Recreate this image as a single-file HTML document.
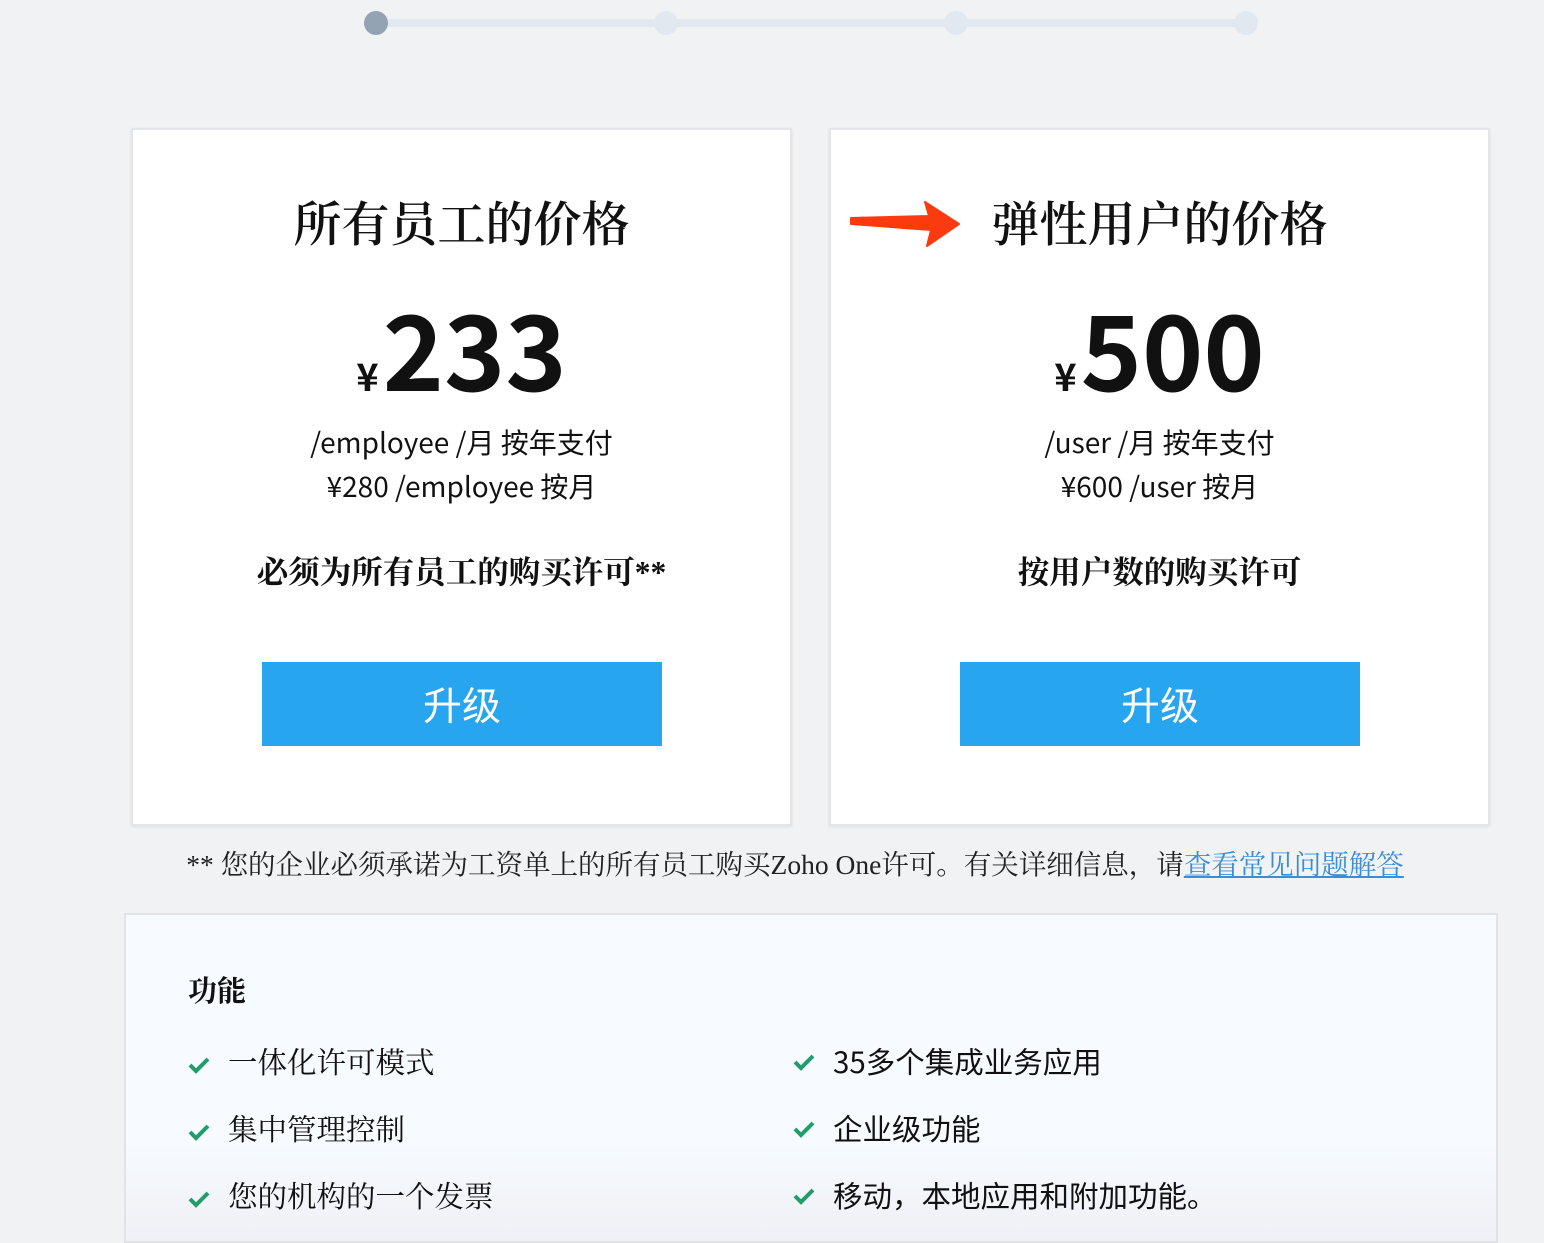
<!DOCTYPE html>
<html><head><meta charset="utf-8"><style>
*{margin:0;padding:0;box-sizing:border-box}
body{width:1544px;height:1226px;overflow:hidden;background:#f1f2f4;font-family:"Liberation Sans","Noto Sans CJK SC",sans-serif;color:#111;position:relative}
.abs{position:absolute}
.track{left:376px;top:19px;width:870px;height:8px;background:#e2e8f0}
.dot{width:24px;height:24px;border-radius:50%;background:#e2e8f0;top:11px}
.card{background:#fff;border:2px solid #e3e5e8;top:128px;width:661px;height:698px;box-shadow:0 1px 3px rgba(0,0,0,.08)}
.t{position:absolute;left:0;right:0;text-align:center}
.title{top:66px;font:48px "Liberation Serif","Noto Serif CJK SC",serif;font-weight:600;line-height:60px}
.price{top:156px;font-weight:bold;font-size:104px;line-height:120px;font-family:"Noto Sans CJK SC","Liberation Sans",sans-serif}
.price small{font-size:38px;vertical-align:baseline;margin-right:4px}
.l1{top:292px;font-size:28px;line-height:40px;font-family:"Noto Sans CJK SC",sans-serif}
.l2{top:336px;font-size:28px;line-height:40px;font-family:"Noto Sans CJK SC",sans-serif}
.l3{top:422px;font:bold 31.5px "Liberation Serif","Noto Serif CJK SC",serif;line-height:42px}
.btn{position:absolute;left:129px;top:532px;width:400px;height:84px;background:#27a5ef;color:#fff;font-size:39px;text-align:center;line-height:84px;font-family:"Noto Sans CJK SC",sans-serif}
.foot{left:0;width:1590px;text-align:center;top:842px;font:27.5px "Liberation Serif","Noto Serif CJK SC",serif;letter-spacing:0;color:#222}
.foot a{color:#3b8ed6;text-decoration:underline}
.feat{left:124px;top:913px;width:1374px;height:330px;background:linear-gradient(#f7faff,#f7faff 70%,#eef0f4);border:2px solid #e1e3e7}
.h{left:62px;top:54px;font:bold 29px "Liberation Serif","Noto Serif CJK SC",serif}
.it{font:29.5px "Liberation Serif","Noto Serif CJK SC",serif;line-height:40px}
.it svg{position:absolute;left:-40px;top:12px}
.r{font-family:"Noto Sans CJK SC",sans-serif}
</style></head><body>
<div class="abs track"></div>
<div class="abs dot" style="left:364px;background:#94a3b4"></div>
<div class="abs dot" style="left:654px"></div>
<div class="abs dot" style="left:944px"></div>
<div class="abs dot" style="left:1234px"></div>

<div class="abs card" style="left:131px">
<div class="t title">所有员工的价格</div>
<div class="t price"><small>¥</small>233</div>
<div class="t l1">/employee /月 按年支付</div>
<div class="t l2">¥280 /employee 按月</div>
<div class="t l3">必须为所有员工的购买许可**</div>
<div class="btn">升级</div>
</div>

<div class="abs card" style="left:829px">
<svg class="abs" style="left:16px;top:70px" width="115" height="48" viewBox="0 0 115 48"><path d="M4 18 L82 16 L78 2 L112 24 L80 46 L84 30 L4 24 Z" fill="#fc3a0f" stroke="#fc3a0f" stroke-width="2" stroke-linejoin="round"/></svg>
<div class="t title" style="left:0">弹性用户的价格</div>
<div class="t price"><small>¥</small>500</div>
<div class="t l1">/user /月 按年支付</div>
<div class="t l2">¥600 /user 按月</div>
<div class="t l3">按用户数的购买许可</div>
<div class="btn">升级</div>
</div>

<div class="abs foot">** 您的企业必须承诺为工资单上的所有员工购买Zoho One许可。有关详细信息，请<a>查看常见问题解答</a></div>

<div class="abs feat">
<div class="abs h">功能</div>
<div class="abs it" style="left:102px;top:129px"><svg width="22" height="18"><path d="M2 9 L8 15 L20 3" stroke="#1f9d6a" stroke-width="4" fill="none"/></svg>一体化许可模式</div>
<div class="abs it" style="left:102px;top:196px"><svg width="22" height="18"><path d="M2 9 L8 15 L20 3" stroke="#1f9d6a" stroke-width="4" fill="none"/></svg>集中管理控制</div>
<div class="abs it" style="left:102px;top:263px"><svg width="22" height="18"><path d="M2 9 L8 15 L20 3" stroke="#1f9d6a" stroke-width="4" fill="none"/></svg>您的机构的一个发票</div>
<div class="abs it r" style="left:707px;top:126px"><svg width="22" height="18"><path d="M2 9 L8 15 L20 3" stroke="#1f9d6a" stroke-width="4" fill="none"/></svg>35多个集成业务应用</div>
<div class="abs it r" style="left:707px;top:193px"><svg width="22" height="18"><path d="M2 9 L8 15 L20 3" stroke="#1f9d6a" stroke-width="4" fill="none"/></svg>企业级功能</div>
<div class="abs it r" style="left:707px;top:260px"><svg width="22" height="18"><path d="M2 9 L8 15 L20 3" stroke="#1f9d6a" stroke-width="4" fill="none"/></svg>移动，本地应用和附加功能。</div>
</div>
</body></html>
